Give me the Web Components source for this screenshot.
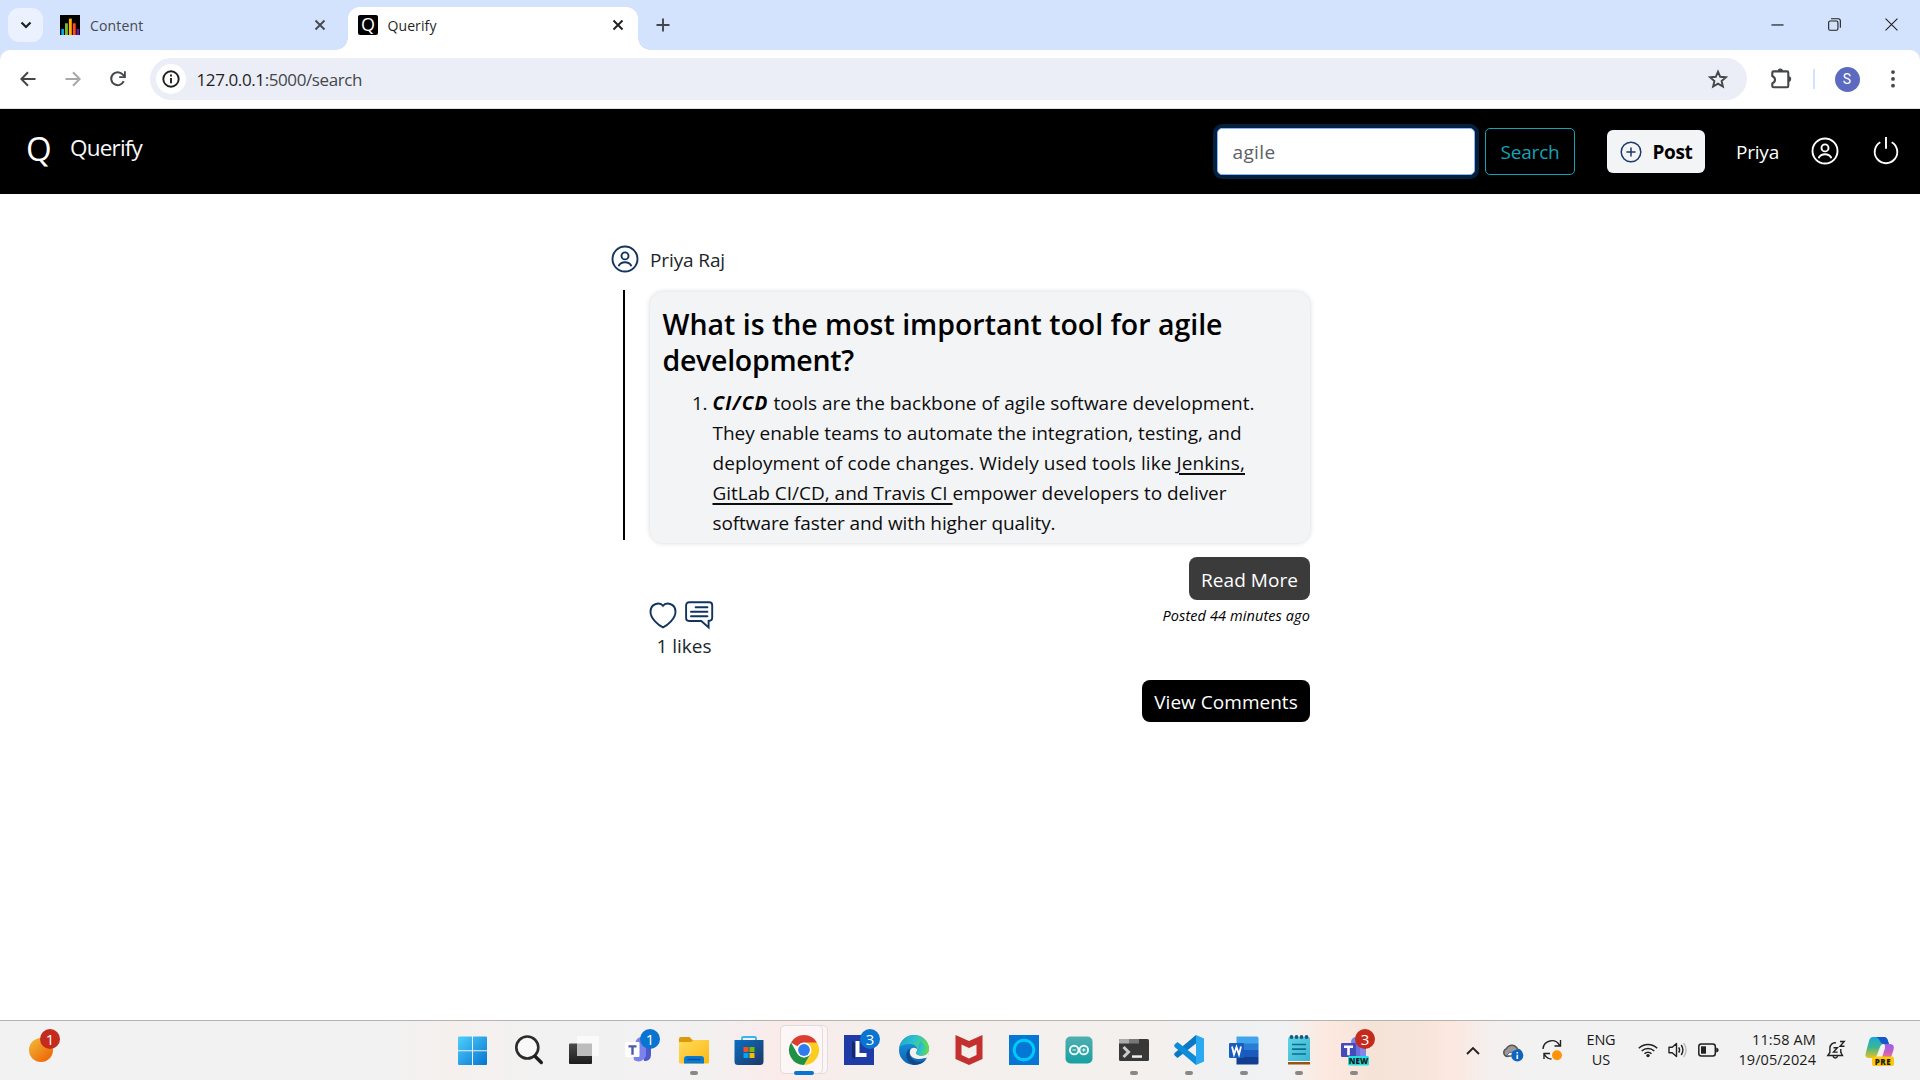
<!DOCTYPE html>
<html lang="en">
<head>
<meta charset="utf-8">
<title>Querify</title>
<style>
html,body{margin:0;padding:0;height:1080px;overflow:hidden;background:#fff}
body{font-family:"Open Sans","Noto Sans",sans-serif;color:#000;display:flex;flex-direction:column}
</style>
</head>
<body>
<browser-chrome></browser-chrome>
<site-header></site-header>
<question-feed></question-feed>
<task-bar></task-bar>
<script>
/* Label that spreads its letters so the run of text takes the given width. */
class UiLabel extends HTMLElement{
  connectedCallback(){
    if(!this.shadowRoot){
      this.attachShadow({mode:'open'}).innerHTML='<style>:host{display:block;white-space:pre;flex:none;line-height:var(--lh,1.4);width:var(--w)}span{display:inline-block}</style><span><slot></slot></span>';
    }
    const w=parseFloat(this.getAttribute('w'));
    if(!w)return;
    this.style.setProperty('--w',w+'px');
    const n=this.textContent.length;
    const now=this.shadowRoot.querySelector('span').getBoundingClientRect().width;
    this.style.letterSpacing=((w-now)/n).toFixed(3)+'px';
  }
}

const ICONS={
 down:['0 0 12 12','<path d="M1.5 3.5 6 8l4.500-4.500" fill="none" stroke="#1f1f1f" stroke-width="2.200"/>'],
 bars:['0 0 20 20','<path d="M0 0h20v20H0z"/><path fill="#03a9f4" d="M1.300 14h2.700v6H1.300z"/><path fill="#7cb82f" d="M5 8.300h2.900V20H5z"/><path fill="#ffb300" d="M8.900 3.600h2.900V20H8.900z"/><path fill="#ff4b1f" d="M12.800 8.300h2.900V20h-2.900z"/><path fill="#6a1b9a" d="M16.500 14h2.700v6h-2.700z"/>'],
 x:['0 0 12 12','<path d="M1.500 1.500l9 9M10.500 1.500l-9 9" stroke="currentColor" stroke-width="1.900"/>'],
 plus:['0 0 14 14','<path d="M7 .5v13M.5 7h13" stroke="#44474a" stroke-width="1.900"/>'],
 min:['0 0 14 14','<path d="M.5 7.500h13" stroke="#111" stroke-width="1.200"/>'],
 restore:['0 0 14 14','<rect x=".7" y="3.200" width="10" height="10" rx="1.600" fill="none" stroke="#222" stroke-width="1.200"/><path d="M3.200.8H11a2.300 2.300 0 0 1 2.300 2.300v7.500" fill="none" stroke="#222" stroke-width="1.200"/>'],
 close:['0 0 14 14','<path d="M.6.6l12.800 12.800M13.400.6.6 13.400" stroke="#222" stroke-width="1.200"/>'],
 back:['0 0 16 16','<path d="M15.500 8H1.800M8 1.300 1.400 8 8 14.700" fill="none" stroke="currentColor" stroke-width="2"/>'],
 fwd:['0 0 16 16','<path d="M.5 8h13.700M8 1.300 14.600 8 8 14.700" fill="none" stroke="currentColor" stroke-width="2"/>'],
 reload:['0 0 16 16','<path d="M13.700 10.200A6.500 6.500 0 1 1 12.600 3.400L15 5.700" fill="none" stroke="#44474a" stroke-width="2"/><path d="M15.800.2v6.900H9.200V5.300h4.800V.2z" fill="#44474a"/>'],
 info:['0 0 18 18','<circle cx="9" cy="9" r="7.700" fill="none" stroke="#1f1f1f" stroke-width="1.900"/><path d="M9 8v5.200M9 4.600v2" stroke="#1f1f1f" stroke-width="1.900"/>'],
 star:['0 0 20 20','<path d="M10 2.600l2.200 5.200 5.700.5-4.300 3.700 1.300 5.500-4.900-2.900-4.900 2.900 1.300-5.500L2.100 8.300l5.700-.5z" fill="none" stroke="#44474a" stroke-width="1.900"/>'],
 ext:['0 0 22 22','<path d="M3.600 4.400H17a1.300 1.300 0 0 1 1.300 1.300V19A1.300 1.300 0 0 1 17 20.300H3.600A1.300 1.300 0 0 1 2.300 19v-2.600q2.700-1.200 2.700-3.600T2.300 9V5.700a1.300 1.300 0 0 1 1.300-1.300z" fill="none" stroke="#44474a" stroke-width="2.100"/><path d="M7.600 3.900a2.700 2.500 0 0 1 5.400 0zM18.600 9.300a2.500 2.700 0 0 1 0 5.600z" fill="#44474a"/>'],
 dots:['0 0 4 20','<g fill="#44474a"><circle cx="2" cy="3.100" r="1.900"/><circle cx="2" cy="9.900" r="1.900"/><circle cx="2" cy="16.700" r="1.900"/></g>'],
 user:['0 0 28 28','<g fill="none" stroke="currentColor" stroke-width="1.900"><circle cx="14" cy="14" r="12.500"/><circle cx="14" cy="10.900" r="3.500"/><path d="M7.900 20.500q1.700-3.300 6.100-3.300t6.100 3.300" stroke-linecap="round"/></g>'],
 post:['0 0 22 22','<g fill="none" stroke="#1c3b66" stroke-width="1.500"><circle cx="11" cy="11" r="9.800"/><path d="M11 6.400v9.200M6.400 11h9.200"/></g>'],
 power:['0 0 26 30','<path d="M13 1v11.800M7.300 6.200a11.300 11.300 0 1 0 11.400 0" fill="none" stroke="#fff" stroke-width="1.900"/>'],
 heart:['0 0 28 28','<path d="M14 4.800C11.500 1.300 1.500 1.400 1.500 11c0 6.600 8 13.300 12.500 15.400C18.500 24.300 26.500 17.600 26.500 11 26.500 1.400 16.500 1.300 14 4.800z" fill="none" stroke="#12355f" stroke-width="1.900"/>'],
 comment:['0 0 28 28','<path d="M4 1.300h20.300a2.900 2.900 0 0 1 2.900 2.900v12.600a2.900 2.900 0 0 1-2.600 2.900l-1 .1v6.700l-7.300-6.500H4a2.900 2.900 0 0 1-2.900-2.900V4.200A2.900 2.900 0 0 1 4 1.300z" fill="none" stroke="#12355f" stroke-width="1.900"/><path d="M10.700 6.200h11.700M6 10.700h16.400M6 15.300h16.400" stroke="#12355f" stroke-width="2" stroke-linecap="round"/>'],
 weather:['0 0 24 24','<defs><linearGradient id="a" x1=".15" y1=".1" x2=".75" y2=".8"><stop stop-color="#efb433"/><stop offset="1" stop-color="#f06f0c"/></linearGradient></defs><circle cx="12" cy="12" r="12" fill="url(#a)"/>'],
 win:['1 0 30 30','<defs><linearGradient id="a" x1="0" y1="0" x2="1" y2="1"><stop stop-color="#4fd0fc"/><stop offset="1" stop-color="#0574d0"/></linearGradient></defs><path fill="url(#a)" d="M0 2.500Q0 1.500 1 1.500h13v13.700H0zM15 1.500h13q1 0 1 1v12.700H15zM0 16.200h14V30H1q-1 0-1-1zM15 16.200h14V29q0 1-1 1H15z"/>'],
 search:['0 0 30 30','<circle cx="13.300" cy="12.500" r="11" fill="#f8f8f8" stroke="#2b2b2b" stroke-width="2.600"/><path d="M21 21.200l6.300 6.300" stroke="#1d1d1d" stroke-width="3.400" stroke-linecap="round"/>'],
 task:['0 0 30 30','<defs><linearGradient id="a" x1="0" y1="0" x2="0" y2="1"><stop stop-color="#4a4a4a"/><stop offset="1" stop-color="#1c1c1c"/></linearGradient></defs><rect x="0" y="8.500" width="23" height="20.500" rx="1" fill="url(#a)"/><rect x="8" y="1" width="22" height="20" rx="1" fill="#fafafa"/><path d="M8 8.500h15V21H8z" fill="#bdbdbd"/>'],
 teams:['0 0 30 30','<circle cx="17.500" cy="8" r="6" fill="#7b83eb"/><circle cx="24" cy="9" r="4" fill="#5059c9"/><path d="M18 12h9v8a6 6 0 0 1-7 6z" fill="#5059c9"/><path d="M8 12h14v9a8 8 0 0 1-12 4z" fill="#7b83eb"/><rect x="1" y="7" width="14.500" height="15" rx="1" fill="#fff"/><path d="M4.500 10.200h8v2.300H9.700v7.200H7.300v-7.200H4.500z" fill="#5059b0"/>'],
 folder:['0 0 30 30','<defs><linearGradient id="a" x1="0" y1="0" x2="1" y2="1"><stop stop-color="#ffdc5c"/><stop offset="1" stop-color="#fdb813"/></linearGradient></defs><path d="M0 3.800Q0 2 2 2h8.500l3 3H28q2 0 2 2v5H0z" fill="#dc9a0b"/><path d="M0 7h12l2.500-2H30v22.500q0 1-1 1H1q-1 0-1-1z" fill="url(#a)"/><path d="M5 28.500v-4.500q0-3 3-3h14q3 0 3 3v4.500z" fill="#0a7ad0"/><path d="M8.500 24.500h13" stroke="#0b4f9c" stroke-width="1.400"/>'],
 store:['0 0 30 30','<defs><linearGradient id="a" x1="0" y1="0" x2="1" y2="1"><stop stop-color="#0a6fc4"/><stop offset="1" stop-color="#1f3763"/></linearGradient></defs><path d="M8 6V3.300Q8 2 9.300 2h11.400Q22 2 22 3.300V6" fill="none" stroke="#36b6f2" stroke-width="1.900"/><path d="M.5 5h29v21.500a3.500 3.500 0 0 1-3.500 3.500H4a3.500 3.500 0 0 1-3.500-3.500z" fill="url(#a)"/><path d="M9.500 12h5v5h-5z" fill="#f25022"/><path d="M15.500 12h5v5h-5z" fill="#7fba00"/><path d="M9.500 18h5v5h-5z" fill="#00a4ef"/><path d="M15.500 18h5v5h-5z" fill="#ffb900"/>'],
 chrome:['0 0 30 30','<path d="M15 15 2 7.500A15 15 0 0 1 28 7.500z" fill="#dd3c30"/><path d="M15 7.500h13A15 15 0 0 1 15 30l6.500-11z" fill="#fccd21"/><path d="M2 7.500 8.600 19 15 22.500 21.500 18.700 15 30A15 15 0 0 1 2 7.500z" fill="#1f9044"/><circle cx="15" cy="15" r="7.500" fill="#fff"/><circle cx="15" cy="15" r="5.900" fill="#2f7cee"/>'],
 ell:['0 0 30 30','<path d="M0 0h30v30H0z" fill="#1f3ba6"/><path d="M8 6v16l3 2.500V8z" fill="#13276b"/><path d="M11.500 6h4v12h7v4h-11z" fill="#fff"/>'],
 edge:['0 0 30 30','<defs><linearGradient id="a" x1="0" y1="0" x2="1" y2=".4"><stop stop-color="#1e9fd8"/><stop offset=".55" stop-color="#2fc3c8"/><stop offset="1" stop-color="#62dc48"/></linearGradient><linearGradient id="b" x1="0" y1="0" x2="0" y2="1"><stop stop-color="#1b9de2"/><stop offset="1" stop-color="#0b62b8"/></linearGradient></defs><circle cx="15" cy="15" r="15" fill="url(#b)"/><path d="M.3 12.500C1.500 5 7.500 0 15 0c8.500 0 15 6 15 13.500 0 4-3.300 7-7.300 7-3.600 0-5.700-1-5.700-2.400 0-.9 1.300-1.400 1.300-3.600 0-2.700-2.900-5.500-7.300-5.500C6 9 2 10.500.3 12.500z" fill="url(#a)"/><path d="M10.800 13.500c-2 8 4 13.500 9.500 13.500 3.500 0 5.700-1.300 7.300-3.700-2 4.400-7 6.700-12.400 6.700C9.500 28.500 7 23.500 7.300 19.500c.3-3 1.700-5 3.500-6z" fill="#114a8b"/><path d="M30 14c0 4-3.300 6.700-7.300 6.700-3.600 0-5.700-1.200-5.700-2.600 0-.9 1.300-1.400 1.300-3.600-1-2-5.500-3-7 .5-2 5.500 3 9.500 9 9 4.500-.3 7.500-2 8-1 1-1.500 2-5 1.700-9z" fill="#f3f0ee"/><path d="M30 13.500c0 4-3.300 7-7.300 7-3.600 0-5.700-1-5.700-2.400 0-.9 1.300-1.400 1.300-3.600l3-8z" fill="url(#a)"/>'],
 mcafee:['0 0 30 30','<path d="M1.500 0l13.500 6L28.500 0v24L15 30 1.500 24zm6 9.500V20l7.500 3.500L22.500 20V9.500L15 13z" fill="#c3302f"/>'],
 alexa:['0 0 30 30','<path d="M0 0h30v30H0z" fill="#0476d3"/><circle cx="15" cy="15" r="9.800" fill="none" stroke="#00c9fb" stroke-width="2.900"/><path d="M13 23.300q3 .8 6-.8l-4.500 4.500z" fill="#00c9fb"/>'],
 arduino:['0 0 30 30','<defs><linearGradient id="a" x1="0" y1="0" x2="0" y2="1"><stop stop-color="#52aeb0"/><stop offset="1" stop-color="#16a0a3"/></linearGradient></defs><rect x="1.500" y="1.500" width="27" height="27" rx="5" fill="url(#a)"/><g fill="none" stroke="#eefafa" stroke-width="1.900"><circle cx="10.200" cy="15" r="4.300"/><circle cx="19.800" cy="15" r="4.300"/><path d="M8.500 15h3.400M18.100 15h3.400M19.800 13.300v3.400" stroke-width="1.100"/></g>'],
 term:['0 0 30 30','<rect y="4" width="30" height="22" rx="1.500" fill="#383838"/><path d="M0 5.500Q0 4 1.500 4H10v4.500H0z" fill="#ababab"/><path d="M10 4h10v4.500H10z" fill="#777"/><path d="M4.500 12l5 5-5 5" fill="none" stroke="#ccc" stroke-width="3"/><path d="M13 20.300h10v2.500H13z" fill="#eee"/>'],
 vscode:['0 0 30 30','<path d="M22 0l8 3.500v23L22 30z" fill="#2aa8f2"/><path d="M22 0v8.500L3.500 23 .3 20.300v-2z" fill="#0a78c2"/><path d="M22 30v-8.500L3.500 7 .3 9.700v2z" fill="#0e8cd8"/>'],
 word:['0 0 30 30','<path d="M7.500 1.500H28q1.500 0 1.500 1.500v6h-22z" fill="#41a5ee"/><path d="M7.500 8.500h22V15h-22z" fill="#2b7cd3"/><path d="M7.500 15h22v7h-22z" fill="#185abd"/><path d="M7.500 22h22v6q0 1.500-1.500 1.500H7.500z" fill="#103f91"/><rect y="8" width="15" height="15" rx="1.300" fill="#1a5dbe"/><path d="M3 11.500l2 8 2.500-7.500 2.500 7.500 2-8" fill="none" stroke="#fff" stroke-width="1.800"/>'],
 note:['0 0 30 30','<defs><linearGradient id="a" x1="0" y1="0" x2="1" y2="1"><stop stop-color="#5fd4e6"/><stop offset="1" stop-color="#3cb4d0"/></linearGradient></defs><path d="M4 27h22v2.500H4z" fill="#9a5310"/><path d="M4 25.500h22V27H4z" fill="#fff"/><path d="M4 3.500Q4 2 5.500 2h19Q26 2 26 3.500V26H4z" fill="url(#a)"/><path d="M8 9.500h14M8 14.200h14M8 19h14" stroke="#0d6e93" stroke-width="1.700"/><g fill="#175a77"><circle cx="7.500" cy="2" r="1.900"/><circle cx="12.500" cy="2" r="1.900"/><circle cx="17.500" cy="2" r="1.900"/><circle cx="22.500" cy="2" r="1.900"/></g>'],
 teams2:['0 0 30 30','<circle cx="17" cy="7" r="5" fill="#7b83eb"/><path d="M14 8h12v14H14z" fill="#6a70dc"/><path d="M21 9h6v12h-6z" fill="#8186e8"/><rect x="2" y="8" width="15" height="14" rx="1" fill="#454bb8"/><path d="M5 10.500h9v2.400h-3.200v7.300H8.200v-7.300H5z" fill="#fff"/><rect x="9" y="21" width="21" height="9.500" rx="1.500" fill="#1ee0e0"/>'],
 up:['0 0 14 9','<path d="M1 8l6-6 6 6" fill="none" stroke="#222" stroke-width="1.900"/>'],
 cloud:['0 0 22 20','<path d="M5 13.500a4 4 0 0 1-.8-7.600C6 2.500 10 1.200 13 3.200c1.400.9 2.200 2 2.500 3.100 2.300.3 3.700 2 3.700 4z" fill="#9a9a9a" stroke="#555" stroke-width="1.500"/><path d="M4 12.800Q7 8 12 9l2 4z" fill="#f0f0f0" stroke="#555"/><circle cx="15.300" cy="12.600" r="6" fill="#0b66c3"/><path d="M15.300 11.700v4.300M15.300 8.900v1.600" stroke="#fff" stroke-width="1.600"/>'],
 sync:['0 0 20 22','<path d="M1 10A8.800 8.800 0 0 1 17.500 6.300M18.500 1v6h-6M2 20v-5.500h6M2.500 15.500Q5 20 9.500 20" fill="none" stroke="#222" stroke-width="1.400"/><circle cx="15" cy="16.200" r="5" fill="#ff9409"/>'],
 wifi:['0 0 20 16','<g fill="none" stroke="#222" stroke-width="1.500"><path d="M.8 6.300a13 13 0 0 1 18.400 0M3.700 9a9 9 0 0 1 12.600 0M6.500 11.800a5 5 0 0 1 7 0"/></g><circle cx="10" cy="13.600" r="1.700" fill="#222"/>'],
 vol:['0 0 20 18','<g fill="none" stroke="#222" stroke-width="1.400"><path d="M1 6.300h3.200L8.500 2.500v13L4.200 11.700H1z" stroke-linejoin="round"/><path d="M10.700 6.300q1.800 2.700 0 5.400M13.200 4q3.400 5 0 10"/><path d="M15.600 2q5 7 0 14" stroke="#bbb"/></g>'],
 batt:['0 0 21 14','<rect x=".8" y="1" width="16.500" height="12" rx="2.500" fill="none" stroke="#222" stroke-width="1.500"/><path d="M3 3.300h5v7.400H3z" fill="#222"/><path d="M18.200 4.500q2.500.5 2.500 2.500t-2.500 2.500z" fill="#222"/>'],
 bell:['0 0 20 20','<g fill="none" stroke="#222" stroke-width="1.400"><path d="M10 2.900C6.500 2.300 3.900 5 3.900 8.200v4.300L1.800 15.500h14.700l-1.600-3M7 15.800q.5 2.200 2.300 2.200t2.300-2.200"/><path d="M14 1.500h4.200L14 6.300h4.500M7.500 7.700h3.900l-3.900 4.400h4.200M14.800 9v4"/></g>'],
 copilot:['0 0 30 30','<defs><linearGradient id="a" x1="0" y1="0" x2="0" y2="1"><stop stop-color="#16a8dd"/><stop offset=".5" stop-color="#3fb68e"/><stop offset="1" stop-color="#e8c21e"/></linearGradient><linearGradient id="b" x1="0" y1="0" x2="0" y2="1"><stop stop-color="#9362ee"/><stop offset=".5" stop-color="#cc5bc4"/><stop offset="1" stop-color="#f38a6d"/></linearGradient></defs><path d="M8 1h11q3 0 4 4l1 3h-5q-3 0-4 3l-3 8q-1 3-4 3H4q-5 0-3-6L4 5q1-4 4-4z" fill="url(#a)"/><path d="M11 1h8q3 0 4 4l1 3h-5q-3 0-4-3t-4-4z" fill="#1557c8"/><path d="M19 8h6q5 0 3.500 6l-2 6q-1 4-4 4h-9q3 0 4-4l2.500-8q.5-3-1-4z" fill="url(#b)"/><rect x="7" y="20.500" width="22" height="9.500" rx="2" fill="#fdc80b"/>']
};
class UiIcon extends HTMLElement{
  connectedCallback(){
    const[v,b]=ICONS[this.getAttribute('name')];
    const w=this.getAttribute('w'),h=this.getAttribute('h')||w;
    if(!this.shadowRoot)this.attachShadow({mode:'open'});
    this.shadowRoot.innerHTML=`<style>:host{display:block;flex:none;width:${w}px;height:${h}px}svg{display:block;overflow:visible}</style><svg width="${w}" height="${h}" viewBox="${v}">${b}</svg>`;
  }
}
function define(tag,html){
  const t=document.createElement('template');t.innerHTML=html;
  customElements.define(tag,class extends HTMLElement{
    constructor(){super();this.attachShadow({mode:'open'}).appendChild(t.content.cloneNode(true));}
  });
}

define('browser-chrome',`<style>
:host{display:block;height:109px;flex:none;background:#d3e2fd}
*{box-sizing:border-box}
ui-label{padding-top:1px}
.tabs{display:flex;height:50px;align-items:flex-start;padding-left:8px}
.menu{width:35px;height:34px;margin-top:8px;border-radius:11px;background:#ebf1fe;display:flex;align-items:center;justify-content:center}
.tab{display:flex;align-items:center;height:50px;font-size:14px;color:#474a4e}
.one{padding-left:17px;width:305px;gap:10px}
.one .x,.two .x{margin-left:auto}
.two{position:relative;background:#fff;width:289.500px;height:43px;margin-top:7px;border-radius:12px 12px 0 0;padding:0 14px 7px 10px;gap:9.500px;color:#1f1f1f}
.two:before,.two:after{content:"";position:absolute;bottom:0;width:12px;height:12px}
.two:before{left:-12px;background:radial-gradient(circle at 0 0,transparent 11.500px,#fff 12px)}
.two:after{right:-12px;background:radial-gradient(circle at 100% 0,transparent 11.500px,#fff 12px)}
.q{width:20px;height:20px;border-radius:2px;background:#000;color:#fff;font:400 18px/19px "Open Sans";text-align:center}
.wc{margin-left:auto;display:flex;gap:44px;padding:18px 22px 0 0}
.bar{display:flex;align-items:center;height:59px;background:#fff;border-radius:10px 10px 0 0;border-bottom:1px solid #dbe3e3;padding-left:20px;color:#44474a}
.omni{display:flex;align-items:center;margin-left:24px;width:1597px;height:42px;border-radius:21px;background:#ebeef7;font-size:17px;padding:0 19px 0 6px}
.i{width:30px;height:30px;border-radius:50%;background:#fff;display:flex;align-items:center;justify-content:center;margin-right:11px}
b{font-weight:400;color:#1f1f1f}
.sep{width:2px;height:20px;background:#d3e2fd;margin:0 20px 0 21px}
.av{width:25px;height:25px;border-radius:50%;background:#5c6bc0;color:#fff;font:14px/25px Roboto;text-align:center;margin-right:31px}
</style>
<div class="tabs">
 <div class="menu"><ui-icon name="down" w="12"></ui-icon></div>
 <div class="tab one"><ui-icon name="bars" w="20"></ui-icon><ui-label w="53.500">Content</ui-label><ui-icon class="x" name="x" w="12" style="margin-right:22px"></ui-icon></div>
 <div class="tab two"><div class="q">Q</div><ui-label w="49">Querify</ui-label><ui-icon class="x" name="x" w="12"></ui-icon></div>
 <ui-icon name="plus" w="14" style="margin:18px 0 0 18.500px"></ui-icon>
 <div class="wc"><ui-icon name="min" w="13"></ui-icon><ui-icon name="restore" w="13"></ui-icon><ui-icon name="close" w="13"></ui-icon></div>
</div>
<div class="bar">
 <ui-icon name="back" w="16"></ui-icon>
 <ui-icon name="fwd" w="16" style="margin-left:28.500px;color:#a6a8aa"></ui-icon>
 <ui-icon name="reload" w="16" style="margin-left:29px"></ui-icon>
 <div class="omni"><div class="i"><ui-icon name="info" w="18"></ui-icon></div><ui-label w="165.500"><b>127.0.0.1</b>:5000/search</ui-label><ui-icon name="star" w="20" style="margin-left:auto"></ui-icon></div>
 <ui-icon name="ext" w="22" style="margin:-3px 0 0 23px"></ui-icon>
 <div class="sep"></div><div class="av">S</div><ui-icon name="dots" w="4" h="20"></ui-icon>
</div>`);

define('site-header',`<style>
:host{display:flex;height:85px;flex:none;background:#000;align-items:center;color:#fff;font-size:19px;box-sizing:border-box;padding:0 21px 0 26px}
*{box-sizing:border-box}
.logo{font:400 33px/40px "Open Sans";width:27px;height:40px;flex:none;margin-top:-6px}
.brand{font-size:22.500px;color:#f8f9fa;margin:-7px 0 0 17px}
.field{margin-left:auto;width:258px;height:47px;border:1.500px solid #86b7fe;border-radius:5px;background:#fff;box-shadow:0 0 0 4px #03203f;color:#5b6065;display:flex;align-items:center;padding:1px 0 0 14.500px}
.search{width:90px;height:47px;margin-left:10px;border:1px solid #17a2b8;border-radius:5px;color:#17a2b8;display:flex;align-items:center;justify-content:center;padding-top:1px}
.post{width:98px;height:43px;margin:0 31px 0 32px;border-radius:6px;background:#f3f4f6;color:#000;font-weight:700;display:flex;align-items:center;padding-left:12.500px;gap:11px}
.post ui-label{padding-top:1px}
</style>
<div class="logo">Q</div><ui-label class="brand" w="72">Querify</ui-label>
<div class="field"><ui-label w="43">agile</ui-label></div>
<div class="search"><ui-label w="59">Search</ui-label></div>
<div class="post"><ui-icon name="post" w="22"></ui-icon><ui-label w="40">Post</ui-label></div>
<ui-label w="43" style="padding-top:2px">Priya</ui-label>
<ui-icon name="user" w="28" style="margin:-1px 0 0 32px"></ui-icon>
<ui-icon name="power" w="26" h="30" style="margin:-1px 0 0 34px;"></ui-icon>`);

define('question-feed',`<style>
:host{display:block;flex:1;min-height:0;box-sizing:border-box;padding:51px 0 0 611px}
*{box-sizing:border-box}
.who{display:flex;align-items:center;height:28px;gap:11px;font-size:19px;color:#212529}
.row{display:flex;margin-top:17px;height:252px}
.rule{width:2px;height:250px;background:#000;margin-left:12px}
.card{width:660.500px;height:251px;margin:1.500px 0 0 24.500px;border-radius:13px;background:#f3f4f6;box-shadow:0 0 5px rgba(0,0,0,.17);padding:14.500px 13px 0}
.h{font-size:28.500px;font-weight:600;--lh:36px}
ol{margin:10px 0 0;padding:0;list-style:none;font-size:19px;--lh:30px;color:#0d0d0d}
li{display:flex;padding-left:50px}
li:first-child{padding-left:29.500px}
.n{width:15px}
b{font-style:italic;color:#000}
u{text-underline-offset:3px;text-decoration-thickness:1.500px}
.foot{width:699px;display:flex;flex-direction:column;align-items:flex-end;padding-top:15px}
.btn{display:flex;align-items:center;justify-content:center;border-radius:8px;color:#fff;font-size:19px}
.more{width:121px;height:43px;background:#3b3b3b;padding-top:3px}
.mid{width:661px;display:flex;justify-content:space-between;height:80px}
.acts{display:flex;gap:8px;padding-top:1px}
.when{font-size:14.500px;font-style:italic;margin-top:6px}
.likes{font-size:19px;margin-left:7.500px;color:#212529}
.view{width:168px;height:42px;background:#000;padding-top:2px}
</style>
<div class="who"><ui-icon name="user" w="28" style="color:#12355f"></ui-icon><ui-label w="75" style="padding-top:2px">Priya Raj</ui-label></div>
<div class="row"><div class="rule"></div><div class="card">
 <ui-label class="h" w="560">What is the most important tool for agile</ui-label>
 <ui-label class="h" w="191.500">development?</ui-label>
 <ol>
 <li><ui-label class="n" w="15">1.</ui-label><ui-label w="56" style="margin:0 5px 0 5.500px"><b>CI/CD</b></ui-label><ui-label w="481">tools are the backbone of agile software development.</ui-label></li>
 <li><ui-label w="529">They enable teams to automate the integration, testing, and</ui-label></li>
 <li><ui-label w="464">deployment of code changes. Widely used tools like </ui-label><ui-label w="68.500"><u>Jenkins,</u></ui-label></li>
 <li><ui-label w="240"><u>GitLab CI/CD, and Travis CI </u></ui-label><ui-label w="274">empower developers to deliver</ui-label></li>
 <li><ui-label w="343">software faster and with higher quality.</ui-label></li>
 </ol>
</div></div>
<div class="foot">
 <div class="btn more"><ui-label w="97">Read More</ui-label></div>
 <div class="mid"><div><div class="acts"><ui-icon name="heart" w="28"></ui-icon><ui-icon name="comment" w="28"></ui-icon></div><ui-label class="likes" w="55" style="margin-top:4px">1 likes</ui-label></div><ui-label class="when" w="147.500">Posted 44 minutes ago</ui-label></div>
 <div class="btn view"><ui-label w="143.500">View Comments</ui-label></div>
</div>`);

/* One pinned app: icon, optional notification badge and running mark. */
class TaskApp extends HTMLElement{
  connectedCallback(){
    if(this.shadowRoot)return;
    const g=n=>this.getAttribute(n);
    const badge=g('badge'),run=g('run');
    this.attachShadow({mode:'open'}).innerHTML=`<style>
:host{display:flex;position:relative;width:55px;height:59px;flex:none;justify-content:center}
.i{margin-top:14px}
.hl{position:absolute;left:3px;top:4px;width:48px;height:49px;border-radius:5px;background:#fbf6f5;border:1px solid #e3dcdb;box-sizing:border-box}
.hl+.hl{width:43px;background:#fcf7f6}
.b{position:absolute;left:28.500px;top:8px;width:20px;height:20px;border-radius:50%;background:${g('color')};color:#fff;font:15px/20px "Open Sans";text-align:center}
.r{position:absolute;bottom:5px;left:50%;transform:translateX(-50%);width:${run==='on'?20:8}px;height:4px;border-radius:2px;background:${run==='on'?'#0a74d1':'#8b8786'}}
.n{position:absolute;left:22px;top:35px;width:20px;text-align:center;font:800 8px/10px "Open Sans"}
.i,.b,.r,.n{z-index:1}.i{position:relative}
</style>${run==='on'?'<div class="hl"></div><div class="hl"></div>':''}<ui-icon class="i" name="${g('icon')}" w="30"></ui-icon>${badge?`<div class="b">${badge}</div>`:''}${run?'<div class="r"></div>':''}${g('tag')?`<div class="n">${g('tag')}</div>`:''}`;
  }
}

define('task-bar',`<style>
:host{display:flex;height:60px;flex:none;box-sizing:border-box;border-top:1px solid #b4b4b4;
background:linear-gradient(90deg,#f2f2f2 0 20%,#f5f0ee 23.500%,#f2f2f2 29%,#f3f0f0 37%,#fbebea 41%,#f4efec 45%,#f4f0ed 60%,#f0f1f3 64%,#f1f2f3 67%,#fde9e0 69%,#f5e3d8 71.500%,#f7e4da 74%,#fde7df 75.500%,#f4efed 77.500%,#f2f2f2 80%);color:#1b1b1b}
*{box-sizing:border-box}
.left{width:446.500px;position:relative;padding:17px 0 0 29px;flex:none}
.badge{position:absolute;left:40px;top:8px;width:20px;height:20px;border-radius:50%;background:#c42b1c;color:#fff;font:15px/20px "Open Sans";text-align:center}
.tray{display:flex;align-items:center;margin-left:84.500px;padding-bottom:1px;flex:none}
.two{display:flex;flex-direction:column;font-size:14.500px;--lh:20px}
.co{position:relative}
.co span{position:absolute;left:7px;top:21px;width:22px;text-align:center;font:800 8px/9px "Open Sans";letter-spacing:.5px}
</style>
<div class="left"><ui-icon name="weather" w="24"></ui-icon><div class="badge">1</div></div>
<task-app icon="win"></task-app><task-app icon="search"></task-app><task-app icon="task"></task-app>
<task-app icon="teams" badge="1" color="#0a74d1"></task-app><task-app icon="folder" run="y"></task-app>
<task-app icon="store"></task-app><task-app icon="chrome" run="on"></task-app>
<task-app icon="ell" badge="3" color="#0a74d1"></task-app><task-app icon="edge"></task-app>
<task-app icon="mcafee"></task-app><task-app icon="alexa"></task-app><task-app icon="arduino"></task-app>
<task-app icon="term" run="y"></task-app><task-app icon="vscode" run="y"></task-app>
<task-app icon="word" run="y"></task-app><task-app icon="note" run="y"></task-app>
<task-app icon="teams2" badge="3" color="#c42b1c" run="y" tag="NEW"></task-app>
<div class="tray">
 <ui-icon name="up" w="14" h="9"></ui-icon>
 <ui-icon name="cloud" w="22" h="20" style="margin:5px 0 0 22px"></ui-icon>
 <ui-icon name="sync" w="20" h="22" style="margin-left:18px"></ui-icon>
 <div class="two" style="margin-left:24.500px;align-items:center"><ui-label w="29">ENG</ui-label><ui-label w="18.500">US</ui-label></div>
 <ui-icon name="wifi" w="20" h="16" style="margin-left:22px"></ui-icon>
 <ui-icon name="vol" w="20" h="18" style="margin-left:10px"></ui-icon>
 <ui-icon name="batt" w="21" h="14" style="margin-left:10px"></ui-icon>
 <div class="two" style="margin-left:20px;align-items:flex-end"><ui-label w="64">11:58 AM</ui-label><ui-label w="77.500">19/05/2024</ui-label></div>
 <ui-icon name="bell" w="20" style="margin-left:9.500px"></ui-icon>
 <div class="co" style="margin:2px 0 0 19.500px"><ui-icon name="copilot" w="30"></ui-icon><span>PRE</span></div>
</div>`);

customElements.define('ui-icon',UiIcon);
customElements.define('task-app',TaskApp);
customElements.define('ui-label',UiLabel);
</script>
</body>
</html>
